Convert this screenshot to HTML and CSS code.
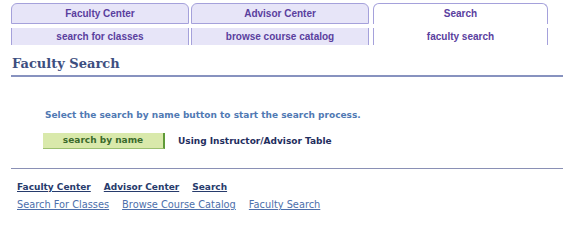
FILE: index.html
```html
<!DOCTYPE html>
<html>
<head>
<meta charset="utf-8">
<link rel="stylesheet" href="styles.css">
</head>
<body>
<div class="tabs">
  <div class="tab">Faculty Center</div>
  <div class="tab tab-2">Advisor Center</div>
  <div class="tab tab-active">Search</div>
</div>
<div class="subtabs">
  <div class="subtab">search for classes</div>
  <div class="subtab subtab-2">browse course catalog</div>
  <div class="subtab subtab-active">faculty search</div>
</div>
<h1 class="title">Faculty Search</h1>
<div class="content">
  <p class="instructions">Select the search by name button to start the search process.</p>
  <div class="action-row">
    <button class="btn">search by name</button>
    <span class="action-label">Using Instructor/Advisor Table</span>
  </div>
</div>
<div class="footer">
  <div class="links links-main">
    <a href="#">Faculty Center</a>
    <a href="#">Advisor Center</a>
    <a href="#">Search</a>
  </div>
  <div class="links links-sub">
    <a href="#">Search For Classes</a>
    <a href="#">Browse Course Catalog</a>
    <a href="#">Faculty Search</a>
  </div>
</div>
</body>
</html>
```
FILE: styles.css
```css
html, body {
  margin: 0;
  padding: 0;
  background: #ffffff;
}
body {
  width: 575px;
  height: 218px;
  overflow: hidden;
}
.tabs {
  display: flex;
  padding: 3px 0 0 11px;
  height: 21px;
}
.tab {
  box-sizing: border-box;
  width: 178px;
  height: 21px;
  background: #e7e5f8;
  border: 1px solid #a5a1db;
  border-radius: 6px 6px 0 0;
  font: bold 10px "Liberation Sans", Arial, sans-serif;
  color: #5a3e9e;
  text-align: center;
  line-height: 20px;
}
.tab-2 {
  margin-left: 2px;
}
.tab-active {
  margin-left: 4px;
  width: 175px;
  background: #ffffff;
  border-bottom: none;
}
.subtabs {
  display: flex;
  padding: 4px 0 0 11px;
  height: 17px;
}
.subtab {
  box-sizing: border-box;
  width: 178px;
  height: 17px;
  background: #e7e5f8;
  border-left: 1px solid #a5a1db;
  border-right: 1px solid #a5a1db;
  font: bold 10px "Liberation Sans", Arial, sans-serif;
  color: #5a3e9e;
  text-align: center;
  line-height: 17px;
}
.subtab-2 {
  margin-left: 2px;
}
.subtab-active {
  margin-left: 4px;
  width: 175px;
  background: #ffffff;
}
.title {
  margin: 10px 12px 0 11px;
  padding: 0 0 0 1px;
  height: 20px;
  border-bottom: 2px solid #8792bf;
  font: bold 13px "DejaVu Serif", Georgia, serif;
  color: #3d4e7f;
  line-height: 17px;
}
.content {
  margin: 0 12px 0 11px;
  height: 91px;
  border-bottom: 1px solid #8a90b5;
}
.instructions {
  margin: 0;
  padding: 32px 0 0 34px;
  font: bold 9px "DejaVu Sans", Verdana, sans-serif;
  color: #5079b3;
  line-height: 12px;
}
.action-row {
  display: flex;
  align-items: center;
  padding: 12px 0 0 32px;
}
.btn {
  box-sizing: border-box;
  width: 122px;
  height: 16px;
  padding: 0;
  margin: 0;
  background: #d9e9ab;
  border: none;
  border-right: 2px solid #5f9a38;
  border-bottom: 1px solid #9cc070;
  font: bold 9px "DejaVu Sans", Verdana, sans-serif;
  color: #3b6a2b;
  text-align: center;
  line-height: 15px;
}
.action-label {
  margin-left: 13px;
  font: bold 9px "DejaVu Sans", Verdana, sans-serif;
  color: #1f2e5e;
}
.footer {
  padding: 10px 0 0 17px;
}
.links {
  display: flex;
  gap: 13px;
  font: 9.8px "DejaVu Sans", Verdana, sans-serif;
  line-height: 17px;
}
.links a {
  color: #4d6fab;
}
.links-main {
  font-size: 9px;
}
.links-main a {
  font-weight: bold;
  color: #273b6c;
}
```
